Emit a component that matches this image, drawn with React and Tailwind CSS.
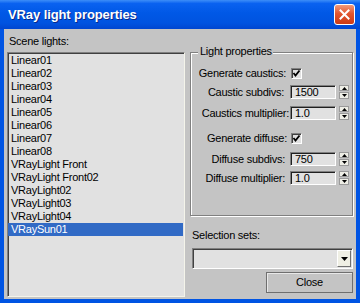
import React from 'react';

const lights = [
  'Linear01',
  'Linear02',
  'Linear03',
  'Linear04',
  'Linear05',
  'Linear06',
  'Linear07',
  'Linear08',
  'VRayLight Front',
  'VRayLight Front02',
  'VRayLight02',
  'VRayLight03',
  'VRayLight04',
  'VRaySun01',
];

const font = { fontFamily: '"Liberation Sans", Arial, sans-serif' };

const Checkbox = () => (
  <div className="h-[11px] w-[11px] shrink-0 border border-t-[#808080] border-l-[#808080] border-b-white border-r-white bg-[#e1e1e1] shadow-[inset_1px_1px_0_#404040]">
    <svg width="9" height="9" viewBox="0 0 9 9" className="block">
      <path d="M1.5 4 L3.5 6.5 L7.5 1.5" fill="none" stroke="#000" strokeWidth="1.8" />
    </svg>
  </div>
);

const Spinner = () => (
  <div className="ml-[3px] flex h-[14px] w-[10px] shrink-0 flex-col gap-[1px]">
    <div className="flex h-[6px] items-center justify-center border border-[#9a9a9a] bg-[#eeeee6]">
      <svg width="5" height="3" viewBox="0 0 5 3" className="block">
        <path d="M2.5 0 L5 3 L0 3 Z" fill="#000" />
      </svg>
    </div>
    <div className="flex h-[7px] items-center justify-center border border-[#9a9a9a] bg-[#eeeee6]">
      <svg width="5" height="3" viewBox="0 0 5 3" className="block">
        <path d="M0 0 L5 0 L2.5 3 Z" fill="#000" />
      </svg>
    </div>
  </div>
);

const NumberField = ({ value }) => (
  <div className="h-[14px] w-[46px] shrink-0 border border-t-[#808080] border-l-[#808080] border-b-white border-r-white bg-[#e1e1e1] pl-[4px] text-[11px] leading-[12px] shadow-[inset_1px_1px_0_#202020]">
    {value}
  </div>
);

const CheckRow = ({ label, labelWidth, gap, className }) => (
  <div className={`flex h-[14px] items-center ${className}`}>
    <span className="whitespace-nowrap text-right" style={{ width: labelWidth, marginRight: gap }}>
      {label}
    </span>
    <Checkbox />
  </div>
);

const SpinRow = ({ label, value, labelWidth, gap, className }) => (
  <div className={`flex h-[14px] items-center ${className}`}>
    <span className="whitespace-nowrap text-right" style={{ width: labelWidth, marginRight: gap }}>
      {label}
    </span>
    <NumberField value={value} />
    <Spinner />
  </div>
);

export default function App() {
  return (
    <div
      className="flex h-[303px] w-[360px] flex-col bg-[#0054e3] text-[11px] tracking-[-0.25px] text-black"
      style={font}
    >
      {/* title bar */}
      <div className="flex h-[29px] shrink-0 items-center bg-[linear-gradient(to_bottom,#3d8ef8_0%,#0a62f0_12%,#0058e6_45%,#0053e0_80%,#0046d0_100%)] pl-[8px] pr-[5px]">
        <span className="flex-1 text-[13px] font-bold tracking-[-0.1px] text-white [text-shadow:1px_1px_0_#0a2a8a]">
          VRay light properties
        </span>
        <div className="flex h-[21px] w-[21px] items-center justify-center rounded-[3px] border border-white bg-[linear-gradient(to_bottom,#f09a7c,#e2562f_45%,#cc3a15)]">
          <svg width="11" height="11" viewBox="0 0 11 11" className="block">
            <path d="M1.5 1.5 L9.5 9.5 M9.5 1.5 L1.5 9.5" stroke="#fff" strokeWidth="2" strokeLinecap="square" />
          </svg>
        </div>
      </div>

      {/* client area */}
      <div className="mx-[4px] mb-[4px] flex flex-1 gap-[5px] bg-[#c4c4c4] px-[3px]">
        {/* left column */}
        <div className="flex w-[178px] flex-col">
          <div className="mt-[6px] h-[13px] pl-[2px] leading-[13px]">Scene lights:</div>
          <div className="mt-[4px] h-[245px] border border-t-[#808080] border-l-[#808080] border-b-[#f4f4ea] border-r-[#f4f4ea] bg-[#e1e1e1] pt-[1px] shadow-[inset_1px_1px_0_#404040]">
            {lights.map((name) => (
              <div
                key={name}
                className={`h-[13px] whitespace-nowrap pl-[3px] leading-[13px] ${
                  name === 'VRaySun01' ? 'mr-[1px] bg-[#316ac5] text-white' : ''
                }`}
              >
                {name}
              </div>
            ))}
          </div>
        </div>

        {/* right column */}
        <div className="flex w-[163px] flex-col">
          <div className="relative mt-[23px] h-[164px] border border-[#808080] shadow-[inset_1px_1px_0_#fff,1px_1px_0_#fff]">
            <span className="absolute left-[7px] top-[-8px] bg-[#c4c4c4] pl-[2px] pr-[1px] leading-[13px]">
              Light properties
            </span>
            <CheckRow label="Generate caustics:" labelWidth={95} gap={5} className="mt-[13px]" />
            <SpinRow label="Caustic subdivs:" value="1500" labelWidth={93} gap={6} className="mt-[5px]" />
            <SpinRow label="Caustics multiplier:" value="1.0" labelWidth={98} gap={1} className="mt-[7px]" />
            <CheckRow label="Generate diffuse:" labelWidth={96} gap={4} className="mt-[11px]" />
            <SpinRow label="Diffuse subdivs:" value="750" labelWidth={94} gap={5} className="mt-[7px]" />
            <SpinRow label="Diffuse multiplier:" value="1.0" labelWidth={94} gap={5} className="mt-[5px]" />
          </div>

          <div className="mt-[13px] h-[13px] pl-[2px] leading-[13px]">Selection sets:</div>
          <div className="ml-[2px] mt-[6px] flex h-[21px] items-center justify-end border border-t-[#808080] border-l-[#808080] border-b-white border-r-white bg-[#e1e1e1] pr-[1px] shadow-[inset_1px_1px_0_#404040]">
            <div className="flex h-[17px] w-[14px] items-center justify-center border border-t-white border-l-white border-b-[#707070] border-r-[#707070] bg-[#efefe4]">
              <svg width="7" height="4" viewBox="0 0 7 4" className="block">
                <path d="M0 0 L7 0 L3.5 4 Z" fill="#000" />
              </svg>
            </div>
          </div>
          <button className="mt-[3px] flex h-[21px] w-[87px] items-center justify-center self-end border border-[#6f6f6f] bg-[#c4c4c4] text-[11px] shadow-[inset_1px_1px_0_#e8e8e8]">
            Close
          </button>
        </div>
      </div>
    </div>
  );
}
